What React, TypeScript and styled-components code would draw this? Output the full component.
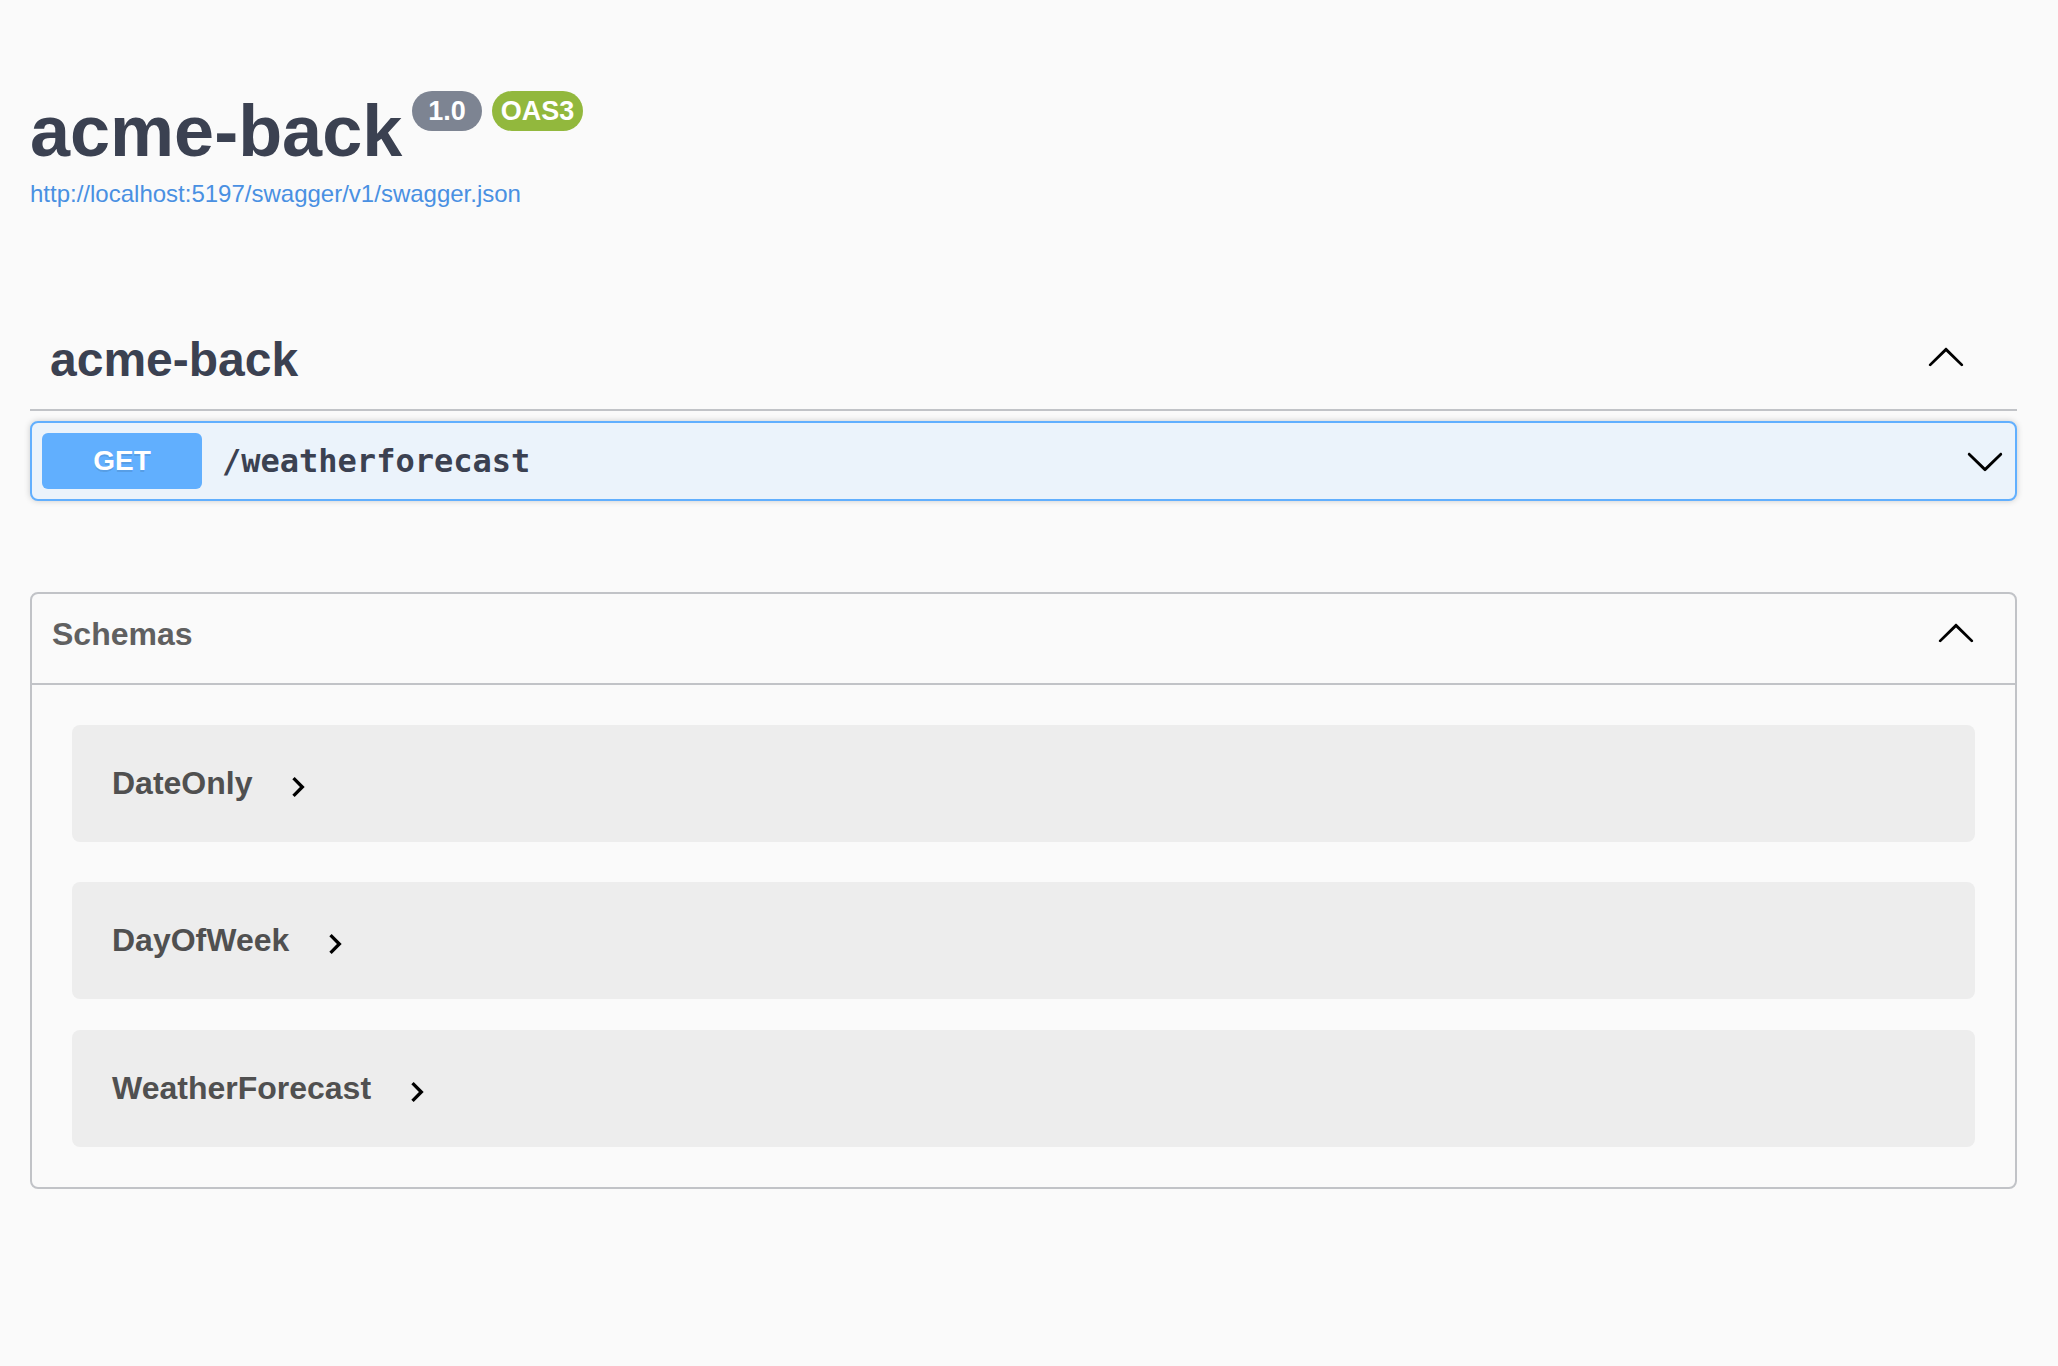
import styled, { createGlobalStyle } from 'styled-components';

const GlobalStyle = createGlobalStyle`
  body {
    margin: 0;
    background: #fafafa;
    font-family: 'Liberation Sans', Arial, Helvetica, sans-serif;
  }
  * {
    box-sizing: border-box;
  }
`;

const ArrowUp = ({ shift = 0 }: { shift?: number }) => (
  <StyledToggle $shift={shift} width="40" height="40" viewBox="0 0 20 20" aria-hidden="true">
    <path d="M17.418 14.908c.272.268.709.268.979 0s.271-.701 0-.969l-7.908-7.83c-.27-.268-.707-.268-.979 0l-7.908 7.83c-.27.268-.27.701 0 .969.271.268.709.268.979 0L10 7.767l7.418 7.141z" />
  </StyledToggle>
);

const ArrowDown = () => (
  <StyledToggle $shift={0} width="40" height="40" viewBox="0 0 20 20" aria-hidden="true">
    <path d="M17.418 6.109c.272-.268.709-.268.979 0s.271.701 0 .969l-7.908 7.83c-.27.268-.707.268-.979 0l-7.908-7.83c-.27-.268-.27-.701 0-.969.271-.268.709-.268.979 0L10 13.25l7.418-7.141z" />
  </StyledToggle>
);

const ArrowRight = () => (
  <StyledModelToggle width="40" height="40" viewBox="0 0 24 24" aria-hidden="true">
    <path d="M10 6L8.59 7.41 13.17 12l-4.58 4.59L10 18l6-6z" />
  </StyledModelToggle>
);

const models = [
  { name: 'DateOnly', spacing: 0 },
  { name: 'DayOfWeek', spacing: 40 },
  { name: 'WeatherForecast', spacing: 31 },
];

export default function App() {
  return (
    <>
      <GlobalStyle />
      <StyledPage>
        <StyledInfo>
          <StyledTitleRow>
            <StyledTitle>acme-back</StyledTitle>
            <StyledBadge $bg="#7d8492" $pad={16}>1.0</StyledBadge>
            <StyledBadge $bg="#92b83d" $pad={9}>OAS3</StyledBadge>
          </StyledTitleRow>
          <StyledSpecLink href="#">http://localhost:5197/swagger/v1/swagger.json</StyledSpecLink>
        </StyledInfo>

        <section>
          <StyledTagHeader>
            <StyledTagTitle>acme-back</StyledTagTitle>
            <ArrowUp shift={-9} />
          </StyledTagHeader>
          <StyledOpBlock>
            <StyledMethod>GET</StyledMethod>
            <StyledPath>/weatherforecast</StyledPath>
            <ArrowDown />
          </StyledOpBlock>
        </section>

        <StyledModels>
          <StyledModelsHeader>
            <StyledModelsTitle>Schemas</StyledModelsTitle>
            <ArrowUp shift={-2} />
          </StyledModelsHeader>
          <StyledModelsBody>
            {models.map((model) => (
              <StyledModelRow key={model.name} $spacing={model.spacing}>
                <StyledModelName>{model.name}</StyledModelName>
                <ArrowRight />
              </StyledModelRow>
            ))}
          </StyledModelsBody>
        </StyledModels>
      </StyledPage>
    </>
  );
}

const StyledPage = styled.div`
  padding: 91px 41px 60px 30px;
  min-height: 100vh;
`;

const StyledInfo = styled.div`
  margin-bottom: 103px;
`;

const StyledTitleRow = styled.div`
  display: flex;
  align-items: flex-start;
`;

const StyledTitle = styled.h2`
  margin: 0;
  font-size: 72px;
  line-height: 80px;
  font-weight: 700;
  color: #3b4151;
`;

const StyledBadge = styled.span<{ $bg: string; $pad: number }>`
  margin-left: 10px;
  height: 40px;
  padding: 0 ${(p) => p.$pad}px;
  border-radius: 40px;
  background: ${(p) => p.$bg};
  color: #fff;
  font-size: 27px;
  line-height: 40px;
  font-weight: 700;
`;

const StyledSpecLink = styled.a`
  display: inline-block;
  margin-top: 9px;
  font-size: 24px;
  line-height: 28px;
  color: #4990e2;
  text-decoration: none;
`;

const StyledTagHeader = styled.div`
  display: flex;
  align-items: center;
  padding: 20px 51px 20px 20px;
  border-bottom: 2px solid #c1c3c7;
`;

const StyledTagTitle = styled.h3`
  flex: 1;
  margin: 0;
  font-size: 48px;
  line-height: 58px;
  font-weight: 700;
  color: #3b4151;
`;

const StyledToggle = styled.svg<{ $shift: number }>`
  flex-shrink: 0;
  fill: #000;
  margin-top: ${(p) => p.$shift}px;
`;

const StyledOpBlock = styled.div`
  display: flex;
  align-items: center;
  margin-top: 10px;
  padding: 10px;
  border: 2px solid #61affe;
  border-radius: 8px;
  background: #ebf3fb;
  box-shadow: 0 0 6px rgba(0, 0, 0, 0.19);
`;

const StyledMethod = styled.span`
  width: 160px;
  height: 56px;
  border-radius: 6px;
  background: #61affe;
  color: #fff;
  font-size: 28px;
  line-height: 56px;
  font-weight: 700;
  text-align: center;
  text-shadow: 0 2px 0 rgba(0, 0, 0, 0.1);
`;

const StyledPath = styled.span`
  flex: 1;
  padding: 0 20px;
  font-family: 'DejaVu Sans Mono', 'Liberation Mono', monospace;
  font-size: 32px;
  font-weight: 700;
  color: #3b4151;
`;

const StyledModels = styled.section`
  margin-top: 91px;
  border: 2px solid #c1c3c7;
  border-radius: 8px;
`;

const StyledModelsHeader = styled.div`
  display: flex;
  align-items: flex-start;
  padding: 20px 39px 29px 20px;
  border-bottom: 2px solid #c1c3c7;
`;

const StyledModelsTitle = styled.h4`
  flex: 1;
  margin: 0;
  font-size: 32px;
  line-height: 40px;
  font-weight: 700;
  color: #606060;
`;

const StyledModelsBody = styled.div`
  padding: 40px;
`;

const StyledModelRow = styled.div<{ $spacing: number }>`
  display: flex;
  align-items: center;
  height: 117px;
  margin-top: ${(p) => p.$spacing}px;
  padding: 0 40px;
  border-radius: 8px;
  background: #ededed;
`;

const StyledModelName = styled.span`
  font-size: 32px;
  font-weight: 700;
  color: #505050;
`;

const StyledModelToggle = styled.svg`
  margin-left: 26px;
  margin-top: 6px;
  fill: #000;
`;
